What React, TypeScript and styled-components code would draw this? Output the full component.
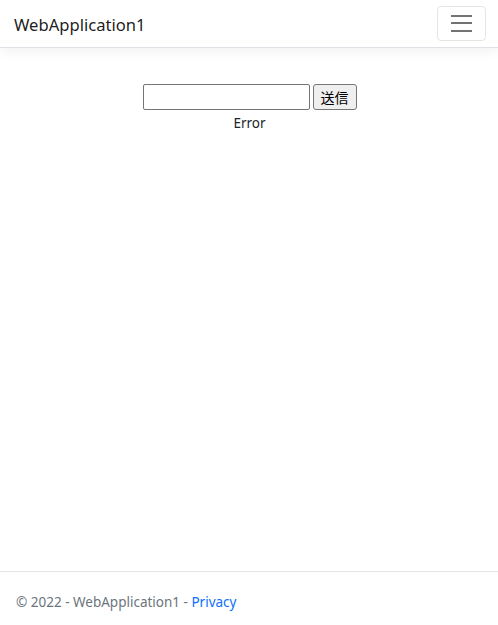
import React from 'react';
import styled, { createGlobalStyle } from 'styled-components';

const GlobalStyle = createGlobalStyle`
  html, body {
    margin: 0;
    padding: 0;
  }
  body {
    font-family: 'Noto Sans', 'Noto Sans CJK JP', sans-serif;
    font-size: 13.5px;
    color: #212529;
    background: #ffffff;
  }
`;

export default function App() {
  return (
    <>
      <GlobalStyle />
      <Page>
        <Header>
          <Brand href='#'>WebApplication1</Brand>
          <Toggler type='button' aria-label='Toggle navigation'>
            <span />
            <span />
            <span />
          </Toggler>
        </Header>

        <Main>
          <Form onSubmit={(e) => e.preventDefault()}>
            <Row>
              <TextInput type='text' />
              <SubmitButton type='submit'>送信</SubmitButton>
            </Row>
            <ErrorText>Error</ErrorText>
          </Form>
        </Main>

        <Footer>
          © 2022 - WebApplication1 - <FooterLink href='#'>Privacy</FooterLink>
        </Footer>
      </Page>
    </>
  );
}

const Page = styled.div`
  min-height: 632px;
  display: flex;
  flex-direction: column;
`;

const Header = styled.header`
  height: 48px;
  box-sizing: border-box;
  padding: 0 12px 0 14px;
  display: flex;
  align-items: center;
  justify-content: space-between;
  background: #ffffff;
  border-bottom: 1px solid #dee2e6;
  box-shadow: 0 3.5px 10.5px rgba(0, 0, 0, 0.05);
`;

const Brand = styled.a`
  font-size: 16.6px;
  color: rgba(0, 0, 0, 0.9);
  text-decoration: none;
  margin-top: 1px;
`;

const Toggler = styled.button`
  width: 49px;
  height: 35px;
  margin-top: -1px;
  box-sizing: border-box;
  background: transparent;
  border: 1px solid rgba(0, 0, 0, 0.1);
  border-radius: 4px;
  display: flex;
  flex-direction: column;
  align-items: center;
  justify-content: center;
  gap: 5.5px;
  padding: 0;
  span {
    display: block;
    width: 21px;
    height: 2px;
    background: rgba(0, 0, 0, 0.55);
  }
`;

const Main = styled.main`
  flex: 1;
  padding-top: 36px;
`;

const Form = styled.form`
  display: flex;
  flex-direction: column;
  align-items: center;
  margin-left: 1px;
`;

const Row = styled.div`
  display: flex;
  align-items: stretch;
  gap: 3px;
`;

const TextInput = styled.input`
  width: 167px;
  height: 26px;
  box-sizing: border-box;
  border: 1px solid #767676;
  border-radius: 2px;
  padding: 1px 2px;
  font-size: 13px;
  font-family: inherit;
`;

const SubmitButton = styled.button`
  width: 44px;
  height: 26px;
  box-sizing: border-box;
  border: 1px solid #767676;
  border-radius: 3px;
  background: #efefef;
  color: #000000;
  font-family: 'Noto Sans CJK JP', sans-serif;
  font-size: 14px;
  padding: 0;
`;

const ErrorText = styled.div`
  margin-top: 3px;
  line-height: 20px;
  color: #212529;
`;

const Footer = styled.footer`
  height: 60px;
  line-height: 60px;
  padding-left: 16px;
  border-top: 1px solid #e5e5e5;
  color: #6c757d;
  white-space: nowrap;
`;

const FooterLink = styled.a`
  color: #0d6efd;
  text-decoration: none;
`;
